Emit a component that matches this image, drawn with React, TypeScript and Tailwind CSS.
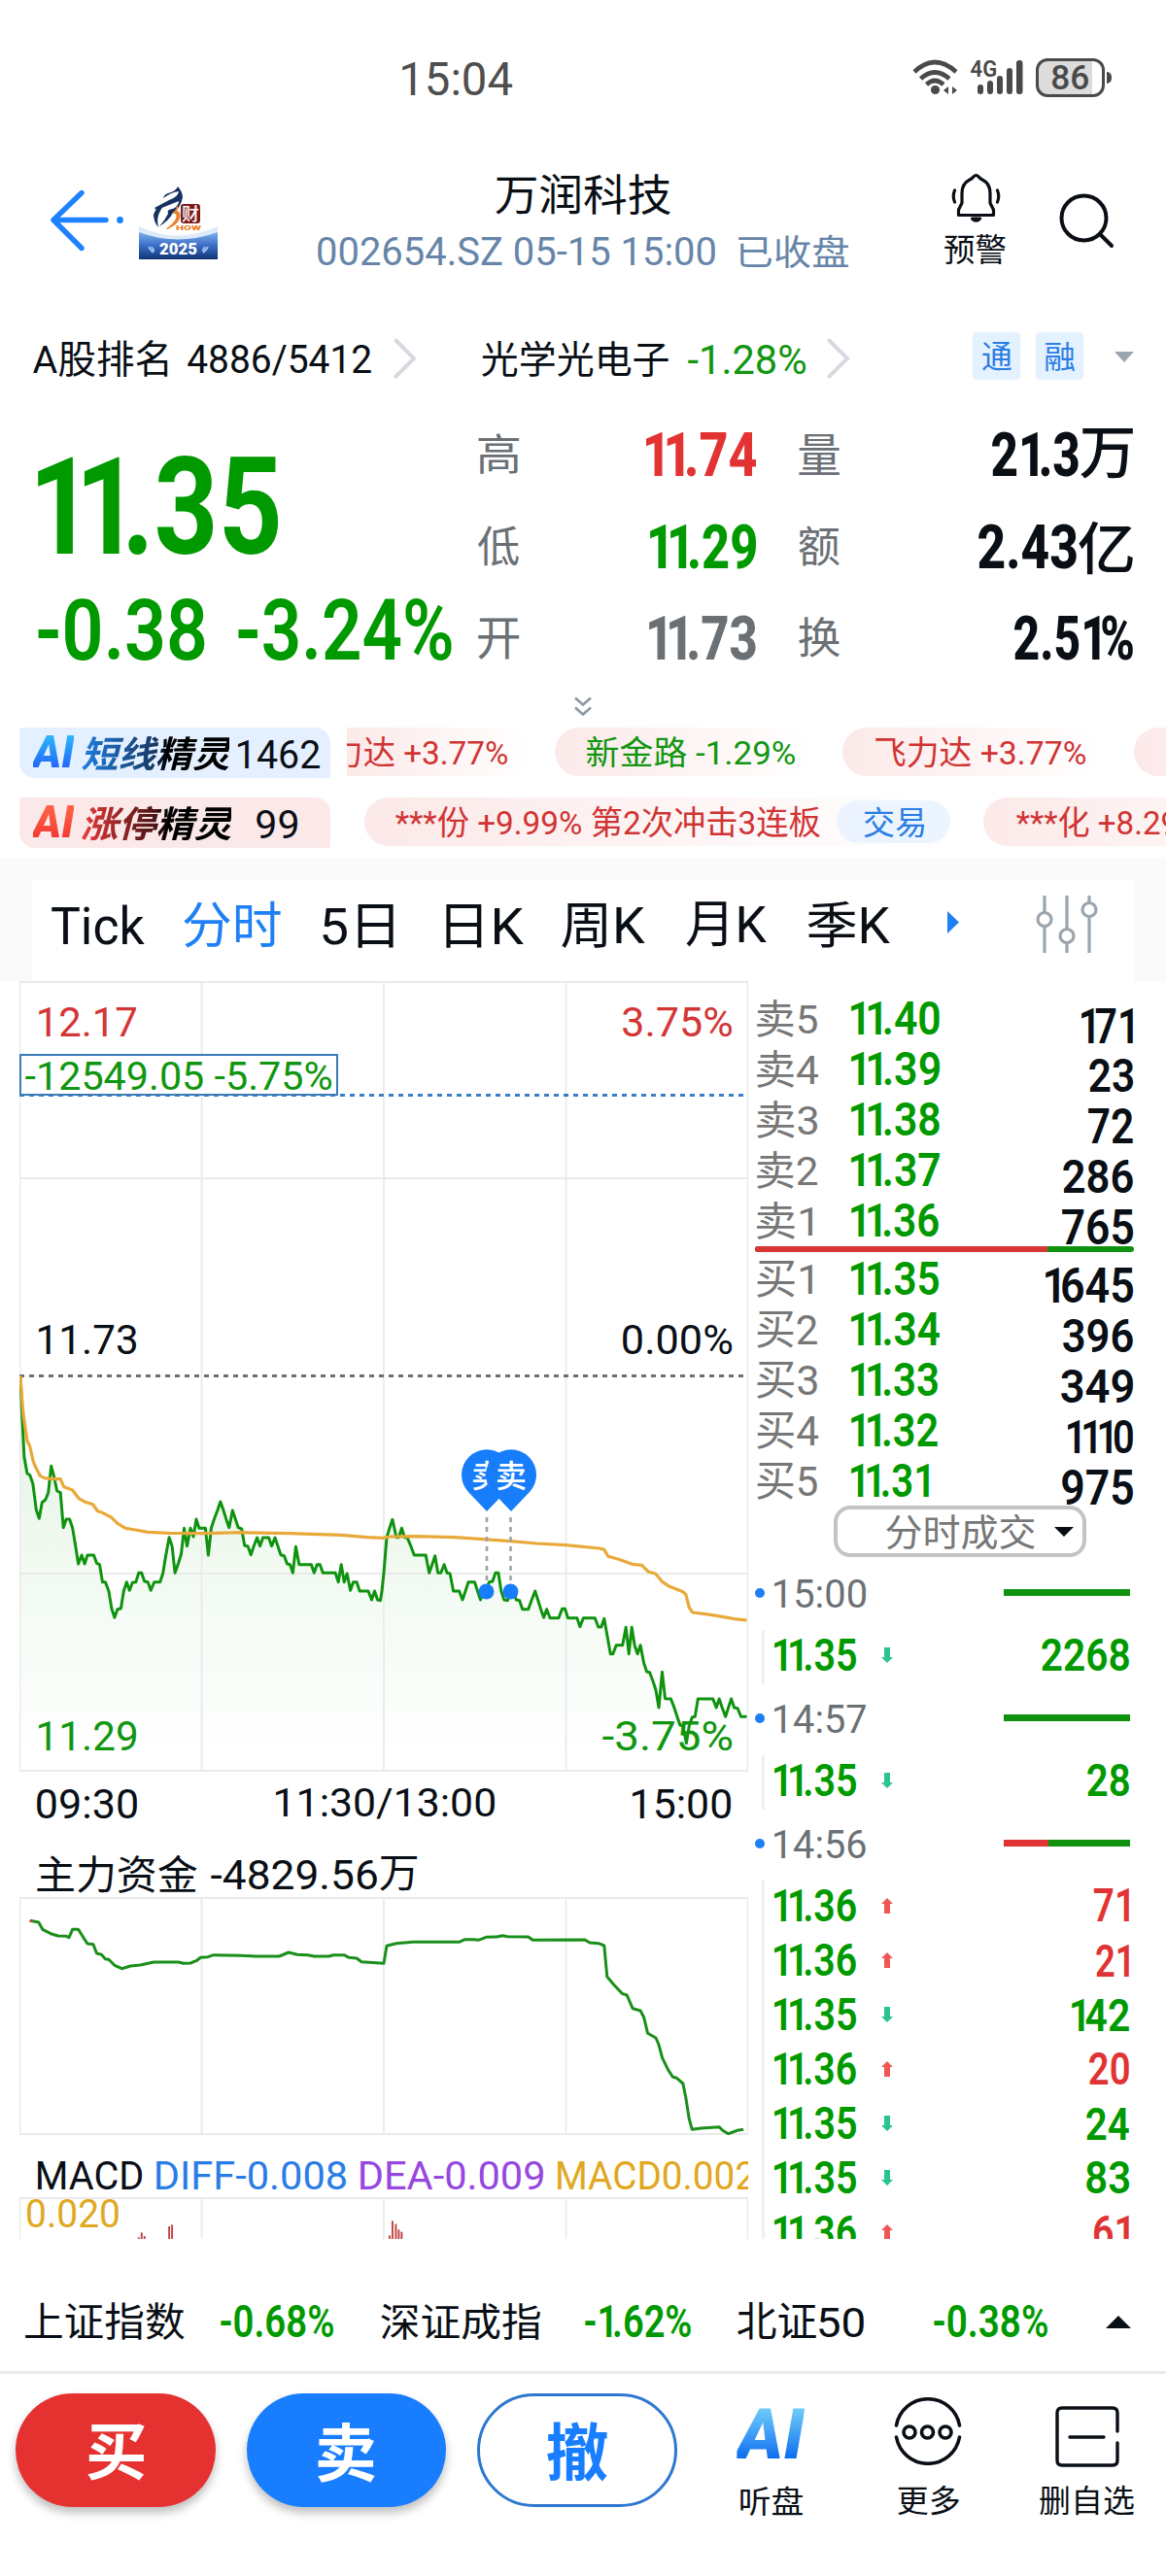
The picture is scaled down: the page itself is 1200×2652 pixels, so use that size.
import React from "react";

const LATIN = "Roboto, 'Noto Sans CJK SC', sans-serif";
const HAN = "'Noto Sans CJK SC', sans-serif";

const ruler = document.createElement("canvas").getContext("2d")!;

/* Heavy figures set the digit 1 on a narrower advance. */
const ONE_KERN = 0.16;

type TProps = {
  w: number;
  h: number;
  weight?: number;
  italic?: boolean;
  han?: boolean;
  className?: string;
  inner?: string;
  children: string;
};

/* Text whose visible glyph box fills exactly w x h pixels. */
function T({ w, h, weight = 400, italic, han, className = "", inner = "", children }: TProps) {
  const family = han ? HAN : LATIN;
  const tight = !han && weight >= 500 && /1/.test(children);
  ruler.font = `${italic ? "italic " : ""}${weight} 100px ${family}`;
  const m = ruler.measureText(children);
  const size = h / ((m.actualBoundingBoxAscent + m.actualBoundingBoxDescent) / 100);
  const k = size / 100;
  const ones = tight ? children.slice(0, -1).split("1").length - 1 : 0;
  const sx = w / ((m.actualBoundingBoxLeft + m.actualBoundingBoxRight) * k - ones * ONE_KERN * size);
  const baseline = size / 2 + ((m.fontBoundingBoxAscent - m.fontBoundingBoxDescent) * k) / 2;
  const dx = m.actualBoundingBoxLeft * k * sx;
  const dy = m.actualBoundingBoxAscent * k - baseline;
  return (
    <div className={`shrink-0 ${className}`} style={{ width: w, height: h }}>
      <div
        className={`w-max origin-top-left whitespace-pre leading-none ${inner}`}
        style={{
          fontFamily: family,
          fontSize: size,
          fontWeight: weight,
          fontStyle: italic ? "italic" : "normal",
          transform: `translate(${dx}px, ${dy}px) scaleX(${sx})`,
        }}
      >
        {tight
          ? children.split(/(1)/).map((part, i) =>
              part === "1" ? (
                <span key={i} className="tracking-[-0.16em]">1</span>
              ) : (
                part
              ),
            )
          : children}
      </div>
    </div>
  );
}

type Pt = [number, number];
const parse = (s: string): Pt[] => s.split(" ").map((p) => p.split(",").map(Number) as Pt);
const toPoints = (pts: Pt[], oy: number) =>
  pts.map(([x, y]) => `${(x / 2.0103 - 20).toFixed(1)},${(y / 3 + oy).toFixed(1)}`).join(" ");

const PRICE = parse(
  "42,49 46,180 50,300 56,350 62,356 68,382 75,463 81,490 87,440 94,432 100,410 106,328 112,362 118,405 125,410 131,518 137,492 144,492 150,518 156,572 162,630 169,603 175,630 181,603 194,603 200,628 206,632 212,686 218,686 225,714 231,768 237,796 243,770 250,768 256,714 262,686 268,712 274,688 281,686 287,658 293,658 299,684 306,686 312,712 319,686 331,686 337,660 343,605 350,548 356,575 362,658 369,628 375,600 381,520 387,575 394,520 400,546 406,492 412,520 425,520 431,603 437,520 443,492 450,465 456,438 462,463 468,492 474,518 481,465 487,492 493,518 500,522 506,573 513,576 519,602 525,575 532,549 538,575 544,549 556,549 562,575 569,549 575,575 581,602 588,605 594,630 600,632 606,658 612,577 619,632 644,632 650,658 656,632 662,632 668,658 694,658 700,686 706,632 712,686 718,660 725,712 731,686 738,686 744,714 762,714 769,741 775,714 781,741 787,743 790,714 794,658 800,548 806,520 812,493 820,548 825,548 831,520 837,548 843,550 850,575 857,603 881,603 888,658 894,632 900,605 906,658 912,658 919,632 925,658 931,660 938,714 950,714 957,741 963,714 969,686 982,686 988,714 994,741 1000,712 1006,712 1012,686 1019,684 1025,658 1031,658 1037,714 1043,741 1050,743 1056,714 1062,714 1068,741 1075,743 1081,770 1093,770 1100,741 1107,714 1113,741 1119,770 1125,796 1131,770 1138,797 1156,797 1163,769 1169,769 1175,797 1194,797 1200,824 1207,797 1231,797 1238,825 1244,825 1250,799 1256,850 1263,908 1268,908 1275,881 1288,881 1295,826 1301,908 1307,826 1313,881 1319,908 1325,881 1332,936 1338,963 1344,965 1351,992 1357,1020 1363,1074 1370,964 1376,1046 1388,1047 1395,1074 1401,1102 1407,1128 1413,1130 1420,1184 1426,1130 1432,1104 1438,1102 1444,1047 1475,1047 1482,1074 1488,1047 1494,1074 1501,1102 1507,1074 1513,1047 1519,1074 1526,1076 1533,1102 1545,1102",
);
const AVERAGE = parse(
  "42,49 48,165 56,250 62,268 69,315 75,335 83,358 92,365 112,368 125,368 132,392 150,402 163,428 175,438 192,446 202,467 212,472 230,486 243,505 260,520 280,525 306,532 350,535 425,536 500,533 600,536 706,541 760,548 794,550 806,546 860,545 940,548 1000,554 1056,560 1110,567 1170,572 1240,582 1250,586 1258,607 1280,616 1308,631 1328,634 1342,655 1356,660 1370,685 1385,700 1413,716 1419,725 1426,765 1433,780 1470,787 1520,800 1545,804",
);
const FUNDS = parse(
  "62,292 80,297 88,319 105,332 120,339 137,340 143,344 150,319 162,319 175,350 181,363 193,365 200,393 210,397 218,410 225,412 237,430 252,440 270,432 290,429 318,420 369,420 380,424 394,423 406,416 415,406 430,404 442,398 500,400 530,402 578,402 597,390 615,397 637,398 650,402 680,402 690,398 712,398 722,406 738,408 748,419 794,424 800,370 820,362 855,358 950,358 962,350 980,350 990,352 1006,343 1028,342 1040,338 1050,341 1093,342 1102,352 1210,351 1220,360 1238,362 1250,369 1256,465 1270,490 1287,517 1297,522 1309,563 1325,570 1332,590 1340,640 1357,654 1363,675 1370,715 1382,752 1392,775 1400,778 1413,795 1419,840 1426,905 1432,937 1450,933 1488,929 1495,940 1507,950 1525,940 1538,937",
);
const MACD_BARS: Pt[] = [
  [287, 1270], [293, 1255], [299, 1266], [350, 1236], [356, 1231],
  [806, 1264], [812, 1219], [819, 1229], [825, 1246], [831, 1253],
];

function StatusBar() {
  return (
    <div className="flex h-[160px] items-start pt-[60px]">
      <T w={113} h={35} className="mt-[4px] ml-[414px] text-[#4f4f4f]">15:04</T>
      <svg className="mt-[1px] ml-[412px]" width="48" height="37" viewBox="0 0 48 37" fill="none" stroke="#4a4a4a" strokeWidth="4.6">
        <path d="M2 13 Q23 -7 45 13" />
        <path d="M8.500 20 Q23 7 38 20" />
        <path d="M14.500 26 Q23 18 32 26" />
        <circle cx="23.500" cy="31.500" r="4.600" fill="#4a4a4a" stroke="none" />
        <path d="M37 28v8l-5-4zM41 28v8l5-4z" fill="#4a4a4a" stroke="none" />
      </svg>
      <div className="relative ml-[12px] h-[38px] w-[55px]">
        <T w={26} h={18} weight={600} className="mt-[2px] text-[#4a4a4a]">4G</T>
        <svg className="absolute top-[1px] left-[7px]" width="48" height="37" viewBox="0 0 48 37" fill="#4a4a4a">
          <rect x="0" y="26" width="6" height="10" rx="3" />
          <rect x="10" y="22" width="6" height="14" rx="3" />
          <rect x="20" y="17" width="6" height="19" rx="3" />
          <rect x="30" y="9" width="6" height="27" rx="3" />
          <rect x="40" y="1" width="6.500" height="35" rx="3" />
        </svg>
      </div>
      <div className="ml-[12px] flex h-[40px] w-[71px] items-center justify-center rounded-[12px] border-[3px] border-[#4a4a4a] bg-gradient-to-r from-[#dcdcdc] from-85% to-white to-85%">
        <T w={37} h={26} weight={500} className="text-[#4a4a4a]">86</T>
      </div>
      <div className="mt-[14px] ml-[2px] h-[12px] w-[5px] rounded-r-full bg-[#4a4a4a]" />
    </div>
  );
}

function ShowLogo() {
  return (
    <svg className="mt-[30px] ml-[16px]" width="81" height="77" viewBox="0 0 81 77">
      <defs>
        <linearGradient id="sky" x1="0" y1="0" x2="0" y2="1">
          <stop offset="0" stopColor="#7fb0ee" />
          <stop offset="0.5" stopColor="#3a6cc4" />
          <stop offset="1" stopColor="#0f3576" />
        </linearGradient>
      </defs>
      <path d="M0 43 Q40 62 81 43 V60 H0Z" fill="#dceafa" />
      <path d="M0 49 Q40 64 81 49 V77 H0Z" fill="url(#sky)" />
      <path d="M40 2 Q38 7 30 9 Q26 10 25 14 Q33 8 41 7 Q40 13 31 16 L16 24 Q17 27 21 25 L41 17 Q41 24 31 26 Q29 27 30 30 Q26 38 21 43 Q31 37 35 29 Q43 24 45 13 Q45 8 40 2Z" fill="#16315f" />
      <path d="M27 20 Q17 23 15 31 Q15 38 20 44 Q18 35 21 29 Q23 24 27 20Z" fill="#16315f" />
      <path d="M38 21 Q40 25 34 30 Q40 29 38 35 Q35 41 27 46 Q38 44 42 35 Q44 28 39 27 Q42 23 38 21Z" fill="#e8822a" />
      <rect x="43" y="20" width="20" height="20" rx="3" fill="#7d1c1c" />
      <text x="53" y="36.500" fontSize="18" fontWeight="500" textAnchor="middle" fill="#fff" fontFamily="Noto Sans CJK SC">财</text>
      <text x="38" y="47" fontSize="7" fontWeight="900" textLength="26" lengthAdjust="spacingAndGlyphs" fill="#e8822a" fontFamily="Roboto">HOW</text>
      <text x="21" y="72" fontSize="16" fontWeight="900" textLength="39" lengthAdjust="spacingAndGlyphs" fill="#fff" fontFamily="Roboto">2025</text>
      <path d="M10 64q2 4 5 6M13 64q1 3 3 4M71 64q-2 4-5 6M68 64q-1 3-3 4" stroke="#9cc2f2" strokeWidth="2" fill="none" />
    </svg>
  );
}

function Header() {
  return (
    <div className="flex h-[182px] items-start">
      <svg className="mt-[35px] ml-[51px]" width="76" height="64" viewBox="0 0 76 64" fill="none" stroke="#1e82ff" strokeWidth="5.400" strokeLinecap="round" strokeLinejoin="round">
        <path d="M33 3.500 L4 31.500 L33 60.500 M4 31.500 H58" />
        <circle cx="72.500" cy="31.500" r="3.400" fill="#1e82ff" stroke="none" />
      </svg>
      <ShowLogo />
      <div className="ml-[102px] w-[547px] pt-[20px]">
        <T w={180} h={42} han className="ml-[184px] text-[#0a0f16]">万润科技</T>
        <div className="mt-[20px] flex text-[#6685a8]">
          <T w={409} h={30} className="mt-[2px] ml-[1px]">002654.SZ 05-15 15:00</T>
          <T w={113} h={35} han className="ml-[24px]">已收盘</T>
        </div>
      </div>
      <div className="ml-[99px] pt-[18px]">
        <svg className="ml-[7px]" width="52" height="52" viewBox="0 0 52 52" fill="none" stroke="#0a0f16" strokeWidth="3.200" strokeLinecap="round" strokeLinejoin="round">
          <path d="M25.500 2.500 C23 2.500 23 5 19 7 C13 10 11 15 11 21 V31 L7.500 38 V43.500 H43.500 V38 L40 31 V21 C40 15 38 10 32 7 C28 5 28 2.500 25.500 2.500Z" />
          <path d="M21.500 47 Q25.500 51 29.500 47Z" fill="#0a0f16" />
          <path d="M3.500 18 Q1 24 3.500 30 M47.500 18 Q50 24 47.500 30" />
        </svg>
        <T w={63} h={31} han className="mt-[11px] text-[#0a0f16]">预警</T>
      </div>
      <svg className="mt-[39px] ml-[55px]" width="60" height="60" viewBox="0 0 60 60" fill="none" stroke="#0a0f16" strokeWidth="4" strokeLinecap="round">
        <circle cx="25.500" cy="25.500" r="23" />
        <path d="M43 43 L54 54" />
      </svg>
    </div>
  );
}

function Chevron({ className }: { className: string }) {
  return (
    <svg className={`shrink-0 ${className}`} width="24" height="42" viewBox="0 0 24 42" fill="none" stroke="#d6dae0" strokeWidth="4" strokeLinecap="round">
      <path d="M2.500 2.500 L21 21 L2.500 39.500" />
    </svg>
  );
}

function RankRow() {
  return (
    <div className="flex h-[92px] items-start text-[#0a0f16]">
      <T w={138} h={37} className="mt-[9px] ml-[34px]">A股排名</T>
      <T w={189} h={32} className="mt-[13px] ml-[21px]">4886/5412</T>
      <Chevron className="mt-[6px] ml-[23px]" />
      <T w={192} h={37} han className="mt-[9px] ml-[67px]">光学光电子</T>
      <T w={121} h={31} className="mt-[13px] ml-[20px] text-[#109610]">-1.28%</T>
      <Chevron className="mt-[6px] ml-[22px]" />
      <div className="ml-[126px] flex h-[49px] w-[49px] items-center justify-center rounded-[4px] bg-[#e4f1ff]">
        <T w={30} h={30} han className="text-[#2a7de4]">通</T>
      </div>
      <div className="ml-[16px] flex h-[49px] w-[49px] items-center justify-center rounded-[4px] bg-[#e4f1ff]">
        <T w={30} h={30} han className="text-[#2a7de4]">融</T>
      </div>
      <svg className="mt-[20px] ml-[32px]" width="20" height="11" viewBox="0 0 20 11">
        <path d="M0 0H20L10 11Z" fill="#9aa6b1" />
      </svg>
    </div>
  );
}

const STATS = [
  { a: "高", av: "11.74", aw: 113, ac: "text-[#e33232]", b: "量", bv: "21.3", bw: 89, unit: "万", uw: 54, uh: 51 },
  { a: "低", av: "11.29", aw: 109, ac: "text-[#009900]", b: "额", bv: "2.43", bw: 101, unit: "亿", uw: 56, uh: 55 },
  { a: "开", av: "11.73", aw: 110, ac: "text-[#6b7075]", b: "换", bv: "2.51%", bw: 122, unit: "", uw: 0, uh: 0 },
];

function Quote() {
  return (
    <div className="flex h-[306px] items-start">
      <div className="w-[492px] pl-[39px] text-[#009900]">
        <T w={248} h={103} weight={700} className="mt-[35px]">11.35</T>
        <div className="mt-[45px] flex">
          <T w={172} h={64} weight={600}>-0.38</T>
          <T w={220} h={64} weight={600} className="ml-[34px]">-3.24%</T>
        </div>
      </div>
      <div className="w-[674px]">
        {STATS.map((s) => (
          <div key={s.a} className="flex h-[94.500px] items-start pt-[11px]">
            <T w={42} h={42} han className="mt-[2px] text-[#6b7075]">{s.a}</T>
            <div className="flex w-[244px] justify-end">
              <T w={s.aw} h={46} weight={800} className={s.ac}>{s.av}</T>
            </div>
            <T w={42} h={42} han className="mt-[2px] ml-[44px] text-[#6b7075]">{s.b}</T>
            <div className="flex w-[302px] items-start justify-end text-[#0a0f16]">
              <T w={s.bw} h={46} weight={800}>{s.bv}</T>
              {s.unit && <T w={s.uw} h={s.uh} weight={500} han className="-mt-[3px] ml-[2px]">{s.unit}</T>}
            </div>
          </div>
        ))}
        <svg className="-mt-[1px] ml-[99px]" width="18" height="21" viewBox="0 0 18 21" fill="none" stroke="#8b98a3" strokeWidth="2.600">
          <path d="M1 1.500 L9 8.500 L17 1.500 M1 11.500 L9 18.500 L17 11.500" />
        </svg>
      </div>
    </div>
  );
}

function Pill({ className, children }: { className: string; children?: React.ReactNode }) {
  return (
    <div className={`flex h-[50px] shrink-0 items-center rounded-full bg-gradient-to-r from-[#fce9e9] to-white ${className}`}>
      {children}
    </div>
  );
}

function SpiritRows() {
  return (
    <div className="h-[135px] pt-[1px]">
      <div className="flex h-[72px] items-start">
        <div className="ml-[20px] flex h-[52px] w-[320px] shrink-0 items-start rounded-tl-[4px] rounded-tr-[16px] rounded-br-[3px] rounded-bl-[16px] bg-[#e4f0ff] pt-[9px]">
          <T w={46} h={33} weight={900} italic className="ml-[11px]" inner="bg-gradient-to-b from-[#36c2fa] to-[#2a50f6] bg-clip-text text-transparent">AI</T>
          <T w={155} h={36} weight={700} italic han className="ml-[7px]" inner="bg-gradient-to-r from-[#1c7fe0] via-[#173a66] via-50% to-black to-60% bg-clip-text text-transparent">短线精灵</T>
          <T w={84} h={30} className="mt-[4px] ml-[6px] text-[#0a0f16]">1462</T>
        </div>
        <div className="ml-[17px] flex w-[843px] overflow-hidden text-[#d03434]">
          <Pill className="w-[190px] overflow-hidden rounded-l-none">
            <T w={180} h={32} className="-ml-[15px]">力达 +3.77%</T>
          </Pill>
          <Pill className="ml-[24px] w-[265px] pl-[33px] text-[#109610]">
            <T w={214} h={32}>新金路 -1.29%</T>
          </Pill>
          <Pill className="ml-[31px] w-[265px] pl-[34px]">
            <T w={216} h={32}>飞力达 +3.77%</T>
          </Pill>
          <Pill className="ml-[35px] w-[265px]" />
        </div>
      </div>
      <div className="flex h-[62px] items-start">
        <div className="ml-[20px] flex h-[52px] w-[320px] shrink-0 items-start rounded-tl-[4px] rounded-tr-[16px] rounded-br-[3px] rounded-bl-[16px] bg-[#fbe9ea] pt-[9px]">
          <T w={46} h={33} weight={900} italic className="ml-[11px]" inner="bg-gradient-to-b from-[#ff6a4a] to-[#f22a2e] bg-clip-text text-transparent">AI</T>
          <T w={157} h={36} weight={700} italic han className="ml-[7px]" inner="bg-gradient-to-r from-[#f03a3a] via-[#4a1414] via-50% to-black to-60% bg-clip-text text-transparent">涨停精灵</T>
          <T w={42} h={30} className="mt-[4px] ml-[23px] text-[#0a0f16]">99</T>
        </div>
        <div className="ml-[17px] flex w-[843px] overflow-hidden text-[#d03434]">
          <Pill className="ml-[18px] w-[605px] pl-[32px]">
            <T w={437} h={32}>***份 +9.99% 第2次冲击3连板</T>
            <div className="ml-[17px] flex h-[44px] w-[117px] items-center justify-center rounded-full bg-[#ecf5ff]">
              <T w={62} h={31} han className="text-[#2a7de4]">交易</T>
            </div>
          </Pill>
          <Pill className="ml-[32px] w-[400px] pl-[34px]">
            <T w={190} h={32}>***化 +8.29%</T>
          </Pill>
        </div>
      </div>
    </div>
  );
}

function Tabs() {
  return (
    <div className="h-[127px] bg-[#fafafa] px-[33px] pt-[23px]">
      <div className="flex h-[104px] items-start bg-white pt-[22px] text-[#0a0f16]">
        <T w={96} h={41} className="mt-[5px] ml-[20px]">Tick</T>
        <T w={100} h={48} han className="ml-[40px] text-[#1e80f5]">分时</T>
        <T w={73} h={45} className="mt-[3px] ml-[43px]">5日</T>
        <T w={80} h={45} className="mt-[3px] ml-[54px]">日K</T>
        <T w={86} h={46} className="mt-[2px] ml-[39px]">周K</T>
        <T w={83} h={46} className="mt-[2px] ml-[42px]">月K</T>
        <T w={85} h={48} className="ml-[42px]">季K</T>
        <svg className="mt-[10px] ml-[59px]" width="12" height="23" viewBox="0 0 12 23">
          <path d="M0 0L12 11.500L0 23Z" fill="#1e80f5" />
        </svg>
        <svg className="-mt-[6px] ml-[79px]" width="64" height="60" viewBox="0 0 64 60" fill="none" stroke="#9ba5ad" strokeWidth="3.200">
          <path d="M9 0V17M9 32V59M32 0V34M32 49V59M55 0V7M55 22V59" />
          <circle cx="9" cy="24.500" r="7" />
          <circle cx="32" cy="41.500" r="7" />
          <circle cx="55" cy="14.500" r="7" />
        </svg>
      </div>
    </div>
  );
}

function Pin({ x }: { x: number }) {
  return (
    <g>
      <path d={`M${x} 546 L${x - 19} 526 A26 26 0 1 1 ${x + 19} 526 Z`} fill="#187dfb" />
      <text x={x} y="521" fontSize="32" fontWeight="500" textAnchor="middle" fill="#fff" fontFamily="Noto Sans CJK SC">卖</text>
    </g>
  );
}

function MainChart() {
  return (
    <div className="relative h-[813px] w-[750px]">
      <svg width="750" height="814" viewBox="0 0 750 814" fill="none">
        <defs>
          <linearGradient id="fade" gradientUnits="userSpaceOnUse" x1="0" y1="480" x2="0" y2="800">
            <stop offset="0" stopColor="#e9f6e9" />
            <stop offset="1" stopColor="#e9f6e9" stopOpacity="0" />
          </linearGradient>
        </defs>
        <polygon points={`${toPoints(PRICE, 390)} 749,812 1,812`} fill="url(#fade)" />
        <g stroke="#e9ebeb" strokeWidth="1.800">
          <path d="M0.500 1H749.500V813H0.500Z M187.500 0V813 M375 0V813 M562.500 0V813 M0 203H750 M0 610H750" />
        </g>
        <path d="M0 117.500H746" stroke="#3a7ecb" strokeWidth="3" strokeDasharray="5 5" />
        <path d="M0 406.500H746" stroke="#6b6f73" strokeWidth="3" strokeDasharray="5 5" />
        <polyline points={toPoints(PRICE, 390)} stroke="#0f930f" strokeWidth="3" strokeLinejoin="round" />
        <polyline points={toPoints(AVERAGE, 390)} stroke="#e9a93a" strokeWidth="3.200" strokeLinejoin="round" />
        <path d="M481 552V622M505.500 552V622" stroke="#9aa3ab" strokeWidth="2.600" strokeDasharray="5 5" />
        <circle cx="480.500" cy="628.500" r="8" fill="#187dfb" />
        <circle cx="505.500" cy="628.500" r="8" fill="#187dfb" />
        <Pin x={481} />
        <Pin x={506} />
      </svg>
      <T w={100} h={32} className="absolute top-[26px] left-[20px] text-[#d33636]">12.17</T>
      <T w={112} h={32} className="absolute top-[26px] right-[17px] text-[#d33636]">3.75%</T>
      <div className="absolute top-[75px] left-0 flex h-[43px] w-[328px] items-center border-2 border-[#3a7bb8] bg-white pt-[3px] pl-[4px]">
        <T w={315} h={30} className="text-[#109610]">-12549.05 -5.75%</T>
      </div>
      <T w={100} h={32} className="absolute top-[353px] left-[20px] text-[#0a0f16]">11.73</T>
      <T w={112} h={32} className="absolute top-[353px] right-[17px] text-[#0a0f16]">0.00%</T>
      <T w={100} h={32} className="absolute top-[761px] left-[20px] text-[#109610]">11.29</T>
      <T w={133} h={32} className="absolute top-[761px] right-[17px] text-[#109610]">-3.75%</T>
    </div>
  );
}

function ChartColumn() {
  return (
    <div className="w-[750px] shrink-0 text-[#0a0f16]">
      <MainChart />
      <div className="flex h-[86px] items-start pt-[18px]">
        <T w={103} h={32} className="ml-[18px]">09:30</T>
        <T w={225} h={32} className="ml-[143px]">11:30/13:00</T>
        <T w={101} h={32} className="ml-[142px]">15:00</T>
      </div>
      <div className="flex h-[44px] items-start pt-[1px]">
        <T w={165} h={39} han className="ml-[18px]">主力资金</T>
        <T w={171} h={32} className="mt-[4px] ml-[14px]">-4829.56</T>
        <T w={38} h={35} han className="mt-[3px] ml-[3px]">万</T>
      </div>
      <svg width="750" height="245" viewBox="0 0 750 245" fill="none">
        <path d="M0.500 1H749.500V244H0.500Z M187.500 0V244 M375 0V244 M562.500 0V244" stroke="#e9ebeb" strokeWidth="1.800" />
        <polyline points={toPoints(FUNDS, -73)} stroke="#1a8f1a" strokeWidth="3" strokeLinejoin="round" />
        <circle cx="12" cy="24.500" r="1.500" fill="#d33636" />
      </svg>
      <div className="flex h-[64px] items-start overflow-hidden pt-[27px]">
        <T w={107} h={30} className="ml-[19px]">MACD</T>
        <T w={195} h={30} className="ml-[15px] text-[#2a7de4]">DIFF-0.008</T>
        <T w={188} h={30} className="ml-[15px] text-[#9747e0]">DEA-0.009</T>
        <T w={203} h={30} className="ml-[15px] text-[#e0a820]">MACD0.002</T>
      </div>
      <div className="relative h-[43px]">
        <svg width="750" height="43" viewBox="0 0 750 43" fill="none">
          <path d="M0.500 43V1H749.500V43 M187.500 0V43 M375 0V43 M562.500 0V43" stroke="#e9ebeb" strokeWidth="1.800" />
          {MACD_BARS.map(([x, y]) => (
            <path key={x} d={`M${x / 2.0103 - 20} 43V${y / 3 - 382}`} stroke="#c24040" strokeWidth="1.900" />
          ))}
        </svg>
        <T w={94} h={30} className="absolute top-[2px] left-[8px] text-[#e0a820]">0.020</T>
      </div>
    </div>
  );
}

type BookRow = [string, number, string, number, string, number];
const ASKS: BookRow[] = [
  ["卖5", 62, "11.40", 91, "171", 53],
  ["卖4", 63, "11.39", 91, "23", 45],
  ["卖3", 62, "11.38", 91, "72", 46],
  ["卖2", 62, "11.37", 91, "286", 72],
  ["卖1", 57, "11.36", 90, "765", 73],
];
const BIDS: BookRow[] = [
  ["买1", 57, "11.35", 90, "1645", 90],
  ["买2", 62, "11.34", 91, "396", 72],
  ["买3", 62, "11.33", 89, "349", 74],
  ["买4", 63, "11.32", 89, "1110", 67],
  ["买5", 62, "11.31", 80, "975", 73],
];

function Book({ rows }: { rows: BookRow[] }) {
  return (
    <>
      {rows.map(([l, lw, p, pw, q, qw]) => (
        <div key={l} className="flex h-[52px] items-start">
          <div className="w-[106px] pl-[9px]">
            <T w={lw} h={38} className="text-[#777]">{l}</T>
          </div>
          <T w={pw} h={36} weight={600} className="mt-[1px] text-[#009a00]">{p}</T>
          <div className="flex grow justify-end pt-[8px]">
            <T w={qw} h={36} weight={600} className="text-[#0a0f16]">{q}</T>
          </div>
        </div>
      ))}
    </>
  );
}

type Deal = { price: string; up: boolean; qty: string; w: number };
const GROUPS: { time: string; split: number; deals: Deal[] }[] = [
  { time: "15:00", split: 0, deals: [{ price: "11.35", up: false, qty: "2268", w: 90 }] },
  { time: "14:57", split: 0, deals: [{ price: "11.35", up: false, qty: "28", w: 43 }] },
  {
    time: "14:56",
    split: 46,
    deals: [
      { price: "11.36", up: true, qty: "71", w: 36 },
      { price: "11.36", up: true, qty: "21", w: 34 },
      { price: "11.35", up: false, qty: "142", w: 59 },
      { price: "11.36", up: true, qty: "20", w: 41 },
      { price: "11.35", up: false, qty: "24", w: 44 },
      { price: "11.35", up: false, qty: "83", w: 44 },
      { price: "11.36", up: true, qty: "61", w: 36 },
    ],
  },
];

function Deals() {
  return (
    <div className="pt-[2px]">
      {GROUPS.map((g) => (
        <div key={g.time}>
          <div className="flex h-[73px] items-center pb-[4px]">
            <div className="ml-[7px] h-[10px] w-[10px] rounded-full bg-[#1e7ff5]" />
            <T w={94} h={30} className="mt-[2px] ml-[10px] text-[#6b7075]">{g.time}</T>
            <div className="ml-[142px] flex h-[7px] w-[130px] bg-[#0f930f]">
              <div className="bg-[#e03434]" style={{ width: g.split }} />
            </div>
          </div>
          <div className="ml-[14px] border-l-[3px] border-[#f0f0f0]">
            {g.deals.map((d, i) => (
              <div key={i} className="flex h-[56px] items-center pb-[4px]">
                <T w={84} h={34} weight={600} className="ml-[10px] text-[#009a00]">{d.price}</T>
                <svg className="ml-[26px]" width="12" height="16" viewBox="0 0 12 16">
                  {d.up ? (
                    <path d="M6 0L12 6H9V16H3V6H0Z" fill="#f05656" />
                  ) : (
                    <path d="M6 16L12 10H9V0H3V10H0Z" fill="#2bc48c" />
                  )}
                </svg>
                <div className="flex w-[243px] justify-end">
                  <T w={d.w} h={34} weight={600} className={d.up ? "text-[#e03434]" : "text-[#009a00]"}>{d.qty}</T>
                </div>
              </div>
            ))}
          </div>
        </div>
      ))}
    </div>
  );
}

function OrderColumn() {
  return (
    <div className="w-[396px] shrink-0 pt-[20px]">
      <Book rows={ASKS} />
      <div className="-mt-[7px] ml-[7px] flex h-[6px] w-[390px] overflow-hidden rounded-full bg-[#0f930f]">
        <div className="h-full w-[301px] bg-[#d83636]" />
      </div>
      <div className="pt-[9px]">
        <Book rows={BIDS} />
      </div>
      <div className="-mt-[8px] ml-[88px] flex h-[53px] w-[260px] items-start rounded-[17px] border-4 border-[#c4c4c4] bg-white pt-[5px]">
        <T w={153} h={36} han className="ml-[50px] text-[#777]">分时成交</T>
        <svg className="mt-[13px] ml-[20px]" width="20" height="10" viewBox="0 0 20 10">
          <path d="M0 0H20L10 10Z" fill="#0a0f16" />
        </svg>
      </div>
      <Deals />
    </div>
  );
}

function IndexBar() {
  return (
    <div className="flex h-[136px] items-start pt-[66px] text-[#0a0f16]">
      <T w={164} h={38} han className="ml-[26px]">上证指数</T>
      <T w={116} h={34} weight={600} className="mt-[2px] ml-[37px] text-[#009a00]">-0.68%</T>
      <T w={164} h={38} han className="ml-[49px]">深证成指</T>
      <T w={109} h={34} weight={600} className="mt-[2px] ml-[46px] text-[#009a00]">-1.62%</T>
      <T w={81} h={38} han className="ml-[48px]">北证</T>
      <T w={46} h={32} className="mt-[4px] ml-[3px]">50</T>
      <T w={117} h={34} weight={600} className="mt-[2px] ml-[72px] text-[#009a00]">-0.38%</T>
      <svg className="mt-[13px] ml-[60px]" width="26" height="13" viewBox="0 0 26 13">
        <path d="M0 13L13 0L26 13Z" fill="#0a0f16" />
      </svg>
    </div>
  );
}

function ActionBar() {
  return (
    <div className="flex h-[211px] items-start border-t-[3px] border-[#e9ecec] pt-[20px] text-[#0a0f16]">
      <div className="ml-[16px] flex h-[117px] w-[206px] items-center justify-center rounded-full bg-[#e63131] pt-[5px] shadow-[0_6px_10px_rgba(0,0,0,0.25)]">
        <T w={59} h={58} weight={700} han className="text-white">买</T>
      </div>
      <div className="ml-[32px] flex h-[117px] w-[205px] items-center justify-center rounded-full bg-[#187dff] pt-[3px] shadow-[0_6px_10px_rgba(0,0,0,0.25)]">
        <T w={59} h={61} weight={700} han className="text-white">卖</T>
      </div>
      <div className="ml-[32px] flex h-[117px] w-[206px] items-center justify-center rounded-full border-[3px] border-[#2d78d0] pt-[3px]">
        <T w={62} h={61} weight={700} han className="text-[#187dff]">撤</T>
      </div>
      <div className="ml-[59px] w-[75px] pt-[16px]">
        <T w={75} h={52} weight={900} italic className="-ml-[2px]" inner="bg-gradient-to-b from-[#6cc8f8] from-15% to-[#0a6cf0] to-85% bg-clip-text text-transparent">AI</T>
        <T w={64} h={30} han className="mt-[28px] ml-[6px]">听盘</T>
      </div>
      <div className="ml-[89px] pt-[4px]">
        <svg width="70" height="70" viewBox="0 0 70 70" fill="none" stroke="#0a0f16" strokeWidth="3.600">
          <path d="M2.500 29 A33 33 0 0 1 67.500 29 M2.500 41 A33 33 0 0 0 67.500 41" strokeLinecap="round" />
          <circle cx="16" cy="36" r="6" />
          <circle cx="34.500" cy="36" r="6" />
          <circle cx="53" cy="36" r="6" />
        </svg>
        <T w={63} h={30} han className="mt-[22px] ml-[4px]">更多</T>
      </div>
      <div className="ml-[80px] pt-[13px]">
        <svg className="ml-[16px]" width="66" height="63" viewBox="0 0 66 63" fill="none" stroke="#0a0f16" strokeWidth="3.400" strokeLinecap="round">
          <path d="M64 26V7Q64 2 59 2H7Q2 2 2 7V56Q2 61 7 61H59Q64 61 64 56V38 M15 32H50" />
        </svg>
        <T w={97} h={30} han className="mt-[20px]">删自选</T>
      </div>
    </div>
  );
}

export default function App() {
  return (
    <div className="h-[2652px] w-[1200px] overflow-hidden bg-white">
      <StatusBar />
      <Header />
      <RankRow />
      <Quote />
      <div className="h-[8px]" />
      <SpiritRows />
      <Tabs />
      <div className="flex h-[1295px] overflow-hidden pl-[20px]">
        <ChartColumn />
        <OrderColumn />
      </div>
      <IndexBar />
      <ActionBar />
    </div>
  );
}
